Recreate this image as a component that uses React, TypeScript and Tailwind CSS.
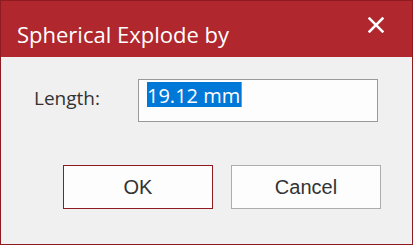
import React from 'react';

const App: React.FC = () => {
  return (
    <div className="w-[413px] h-[245px] flex flex-col border border-[#8e1b1f] bg-[#f0f0f0] overflow-hidden">
      <div className="h-[56px] shrink-0 bg-[#b0272e] flex items-start justify-between">
        <span className="ml-[16px] mt-[18px] text-white text-[22px] leading-[30px] font-['Open_Sans',sans-serif]">
          Spherical Explode by
        </span>
        <svg className="mr-[28px] mt-[16px]" width="16" height="16" viewBox="0 0 16 16">
          <path d="M1.6 1.6 L14.4 14.4 M14.4 1.6 L1.6 14.4" stroke="#ffffff" strokeWidth="2.6" strokeLinecap="square" />
        </svg>
      </div>
      <div className="flex items-start mt-[22px] font-['Open_Sans',sans-serif]">
        <span className="ml-[33px] mt-[6px] w-[104px] text-[19px] leading-[26px] text-[#333333]">Length:</span>
        <div className="w-[240px] h-[43px] bg-[#fdfdfd] border border-[#999999] flex items-start pl-[8px] pt-[2px]">
          <span className="inline-block h-[25px] bg-[#0078d7] text-white text-[20px] leading-[28px] pr-[1px] border-r border-[#f07c1e]">19.12 mm</span>
        </div>
      </div>
      <div className="flex mt-[43px] ml-[62px] gap-[18px] font-['Liberation_Sans',sans-serif]">
        <button className="w-[150px] h-[44px] bg-[#fdfdfd] border border-[#8e1b1f] text-[20px] text-[#333333]">OK</button>
        <button className="w-[150px] h-[44px] bg-[#fdfdfd] border border-[#adadad] text-[20px] text-[#333333]">Cancel</button>
      </div>
    </div>
  );
};

export default App;
